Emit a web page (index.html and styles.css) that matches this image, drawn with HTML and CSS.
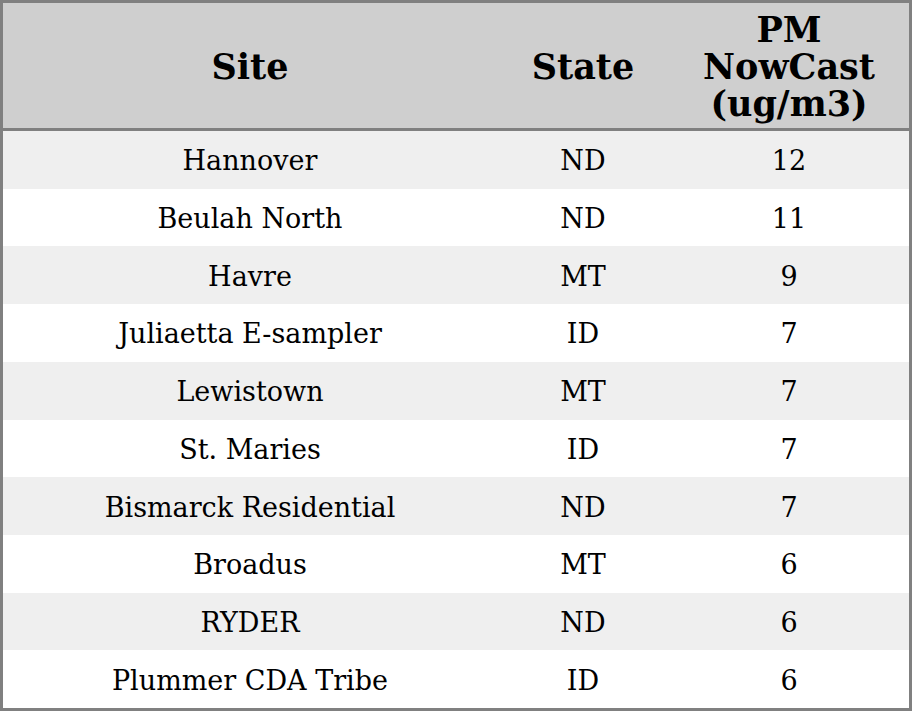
FILE: index.html
```html
<!DOCTYPE html>
<html>
<head>
<meta charset="utf-8">
<link rel="stylesheet" href="styles.css">
</head>
<body>
<div class="table">
  <div class="head">
    <div class="th">Site</div>
    <div class="th">State</div>
    <div class="th">PM<br>NowCast<br>(ug/m3)</div>
  </div>
  <div class="body">
    <div class="row alt"><div>Hannover</div><div>ND</div><div>12</div></div>
    <div class="row"><div>Beulah North</div><div>ND</div><div>11</div></div>
    <div class="row alt"><div>Havre</div><div>MT</div><div>9</div></div>
    <div class="row"><div>Juliaetta E-sampler</div><div>ID</div><div>7</div></div>
    <div class="row alt"><div>Lewistown</div><div>MT</div><div>7</div></div>
    <div class="row"><div>St. Maries</div><div>ID</div><div>7</div></div>
    <div class="row alt"><div>Bismarck Residential</div><div>ND</div><div>7</div></div>
    <div class="row"><div>Broadus</div><div>MT</div><div>6</div></div>
    <div class="row alt"><div>RYDER</div><div>ND</div><div>6</div></div>
    <div class="row"><div>Plummer CDA Tribe</div><div>ID</div><div>6</div></div>
  </div>
</div>
</body>
</html>
```
FILE: styles.css
```css
html, body {
  margin: 0;
  padding: 0;
  background: #ffffff;
}
.table {
  box-sizing: border-box;
  width: 912px;
  height: 711px;
  border: 3px solid #808080;
  display: flex;
  flex-direction: column;
  font-family: "DejaVu Serif", serif;
  color: #000;
}
.head {
  height: 125px;
  flex: none;
  background: #cfcfcf;
  border-bottom: 3px solid #808080;
  display: grid;
  grid-template-columns: 494px 172px 240px;
  align-items: center;
}
.th {
  text-align: center;
  font-weight: bold;
  font-size: 35px;
  line-height: 37px;
  padding-top: 2px;
}
.body {
  flex: 1;
  display: grid;
  grid-template-rows: repeat(10, 1fr);
}
.row {
  display: grid;
  grid-template-columns: 494px 172px 240px;
  align-items: center;
  text-align: center;
  font-size: 27px;
  padding-top: 2px;
  background: #ffffff;
}
.row.alt {
  background: #efefef;
}
```
